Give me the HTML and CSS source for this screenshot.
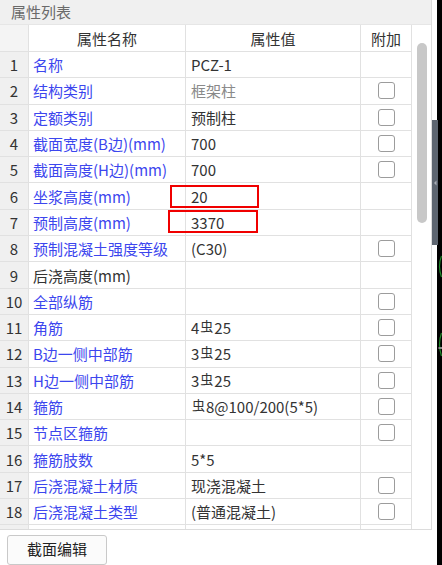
FILE: index.html
```html
<!DOCTYPE html>
<html lang="zh-CN">
<head>
<meta charset="utf-8">
<title>属性列表</title>
<link rel="stylesheet" href="styles.css">
</head>
<body>
<div class="page">
  <div class="left">
    <div class="panel">
      <div class="title">属性列表</div>
      <div class="body">
        <div class="grid">
          <div class="row head"><div class="c num"></div><div class="c name h">属性名称</div><div class="c val h">属性值</div><div class="c add h">附加</div></div>
          <div class="row"><div class="c num">1</div><div class="c name">名称</div><div class="c val">PCZ-1</div><div class="c add"></div></div>
          <div class="row"><div class="c num">2</div><div class="c name">结构类别</div><div class="c val dim">框架柱</div><div class="c add"><span class="cb"></span></div></div>
          <div class="row"><div class="c num">3</div><div class="c name">定额类别</div><div class="c val">预制柱</div><div class="c add"><span class="cb"></span></div></div>
          <div class="row"><div class="c num">4</div><div class="c name">截面宽度(B边)(mm)</div><div class="c val">700</div><div class="c add"><span class="cb"></span></div></div>
          <div class="row"><div class="c num">5</div><div class="c name">截面高度(H边)(mm)</div><div class="c val">700</div><div class="c add"><span class="cb"></span></div></div>
          <div class="row"><div class="c num">6</div><div class="c name">坐浆高度(mm)</div><div class="c val">20</div><div class="c add"></div></div>
          <div class="row"><div class="c num">7</div><div class="c name">预制高度(mm)</div><div class="c val">3370</div><div class="c add"></div></div>
          <div class="row"><div class="c num">8</div><div class="c name">预制混凝土强度等级</div><div class="c val">(C30)</div><div class="c add"><span class="cb"></span></div></div>
          <div class="row"><div class="c num">9</div><div class="c name plain">后浇高度(mm)</div><div class="c val"></div><div class="c add"></div></div>
          <div class="row"><div class="c num">10</div><div class="c name">全部纵筋</div><div class="c val"></div><div class="c add"><span class="cb"></span></div></div>
          <div class="row"><div class="c num">11</div><div class="c name">角筋</div><div class="c val">4<span class="st">虫</span>25</div><div class="c add"><span class="cb"></span></div></div>
          <div class="row"><div class="c num">12</div><div class="c name">B边一侧中部筋</div><div class="c val">3<span class="st">虫</span>25</div><div class="c add"><span class="cb"></span></div></div>
          <div class="row"><div class="c num">13</div><div class="c name">H边一侧中部筋</div><div class="c val">3<span class="st">虫</span>25</div><div class="c add"><span class="cb"></span></div></div>
          <div class="row"><div class="c num">14</div><div class="c name">箍筋</div><div class="c val"><span class="st">虫</span>8@100/200(5*5)</div><div class="c add"><span class="cb"></span></div></div>
          <div class="row"><div class="c num">15</div><div class="c name">节点区箍筋</div><div class="c val"></div><div class="c add"><span class="cb"></span></div></div>
          <div class="row"><div class="c num">16</div><div class="c name">箍筋肢数</div><div class="c val">5*5</div><div class="c add"></div></div>
          <div class="row"><div class="c num">17</div><div class="c name">后浇混凝土材质</div><div class="c val">现浇混凝土</div><div class="c add"><span class="cb"></span></div></div>
          <div class="row"><div class="c num">18</div><div class="c name">后浇混凝土类型</div><div class="c val">(普通混凝土)</div><div class="c add"><span class="cb"></span></div></div>
          <div class="row"><div class="c num">19</div><div class="c name">后浇混凝土强度等级</div><div class="c val">(C30)</div><div class="c add"><span class="cb"></span></div></div>
        </div>
        <div class="scroll"><div class="thumb"></div></div>
      </div>
    </div>
    <div class="mark m1"></div>
    <div class="mark m2"></div>
    <div class="footer"><button class="btn" type="button">截面编辑</button></div>
  </div>
  <svg class="edge" width="10" height="565" viewBox="0 0 10 565">
    <rect x="0" y="0" width="5" height="565" fill="#ffffff"/>
    <rect x="5" y="0" width="5" height="565" fill="#000000"/>
    <rect x="0" y="120" width="6" height="125" fill="#5d6570"/>
    <path d="M2 183 L4.5 180.5 L4.5 185.5 Z" fill="#a9aeb5"/>
    <path d="M9.5 256 Q 5.5 266 9.5 277" stroke="#1f8a2a" stroke-width="1.2" fill="none"/>
    <path d="M9.5 333 Q 5.5 344 9.5 356" stroke="#1f8a2a" stroke-width="1.2" fill="none"/>
    <rect x="6.5" y="347" width="3.5" height="2" fill="#8a8a8a"/>
  </svg>
</div>
</body>
</html>
```

FILE: styles.css
```css
html, body {
  margin: 0;
  padding: 0;
  background: #ffffff;
}
body {
  width: 442px;
  height: 565px;
  overflow: hidden;
  font-family: "Noto Sans CJK SC", "Microsoft YaHei", "Noto Sans", sans-serif;
  font-size: 15px;
  color: #333333;
}
.page {
  display: flex;
  width: 442px;
  height: 565px;
}
.left {
  position: relative;
  width: 432px;
  display: flex;
  flex-direction: column;
}
.panel {
  width: 432px;
  height: 536px;
  box-sizing: border-box;
  border-right: 1px solid #dcdcdc;
  border-bottom: 1px solid #dcdcdc;
  display: flex;
  flex-direction: column;
  overflow: hidden;
}
.title {
  height: 24px;
  line-height: 23px;
  padding-left: 11px;
  background: #f0f0f0;
  color: #6a6a6a;
  border-bottom: 1px solid #e6e6e6;
  flex: none;
}
.body {
  flex: 1;
  display: flex;
  overflow: hidden;
}
.grid {
  width: 412px;
  flex: none;
}
.row {
  display: grid;
  grid-template-columns: 29px 157px 175px 51px;
  height: 26.3px;
}
.row.head {
  height: 27px;
}
.c {
  box-sizing: border-box;
  border-right: 1px solid #e1e1e1;
  border-bottom: 1px solid #e1e1e1;
  display: flex;
  align-items: center;
  white-space: nowrap;
  overflow: hidden;
}
.num {
  background: #f0f0f0;
  justify-content: center;
  color: #333333;
}
.head .num {
  background: #f4f4f4;
}
.h {
  justify-content: center;
  color: #333333;
}
.name {
  padding-left: 4px;
  color: #3c46ee;
}
.name.h {
  padding-left: 0;
  color: #333333;
}
.name.plain {
  color: #333333;
}
.val {
  padding-left: 5px;
  color: #333333;
}
.val.h {
  padding-left: 0;
}
.val.dim {
  color: #8a8a8a;
}
.add {
  justify-content: center;
}
.cb {
  display: block;
  width: 17px;
  height: 17px;
  box-sizing: border-box;
  border: 1.5px solid #9c9c9c;
  border-radius: 3px;
  background: #ffffff;
  margin-left: 1px;
}
.st {
  font-size: 13px;
  position: relative;
  top: -2px;
  margin: 0 1px;
}
.scroll {
  flex: 1;
  position: relative;
}
.thumb {
  position: absolute;
  left: 5px;
  top: 18px;
  width: 10px;
  height: 180px;
  border-radius: 5px;
  background: #c8c8c8;
}
.mark {
  position: absolute;
  box-sizing: border-box;
  border: 2px solid #f00000;
}
.m1 {
  left: 170px;
  top: 185px;
  width: 89px;
  height: 23px;
}
.m2 {
  left: 168px;
  top: 210px;
  width: 90px;
  height: 23px;
}
.footer {
  padding: 5px 0 0 7px;
}
.btn {
  display: block;
  width: 100px;
  height: 30px;
  box-sizing: border-box;
  border: 1px solid #c9c9c9;
  border-radius: 3px;
  background: #fbfbfb;
  font-family: "Noto Sans CJK SC", "Microsoft YaHei", sans-serif;
  font-size: 15px;
  line-height: 26px;
  color: #222222;
  padding: 0 0 2px 0;
  margin: 0;
}
.edge {
  display: block;
  flex: none;
}
```
